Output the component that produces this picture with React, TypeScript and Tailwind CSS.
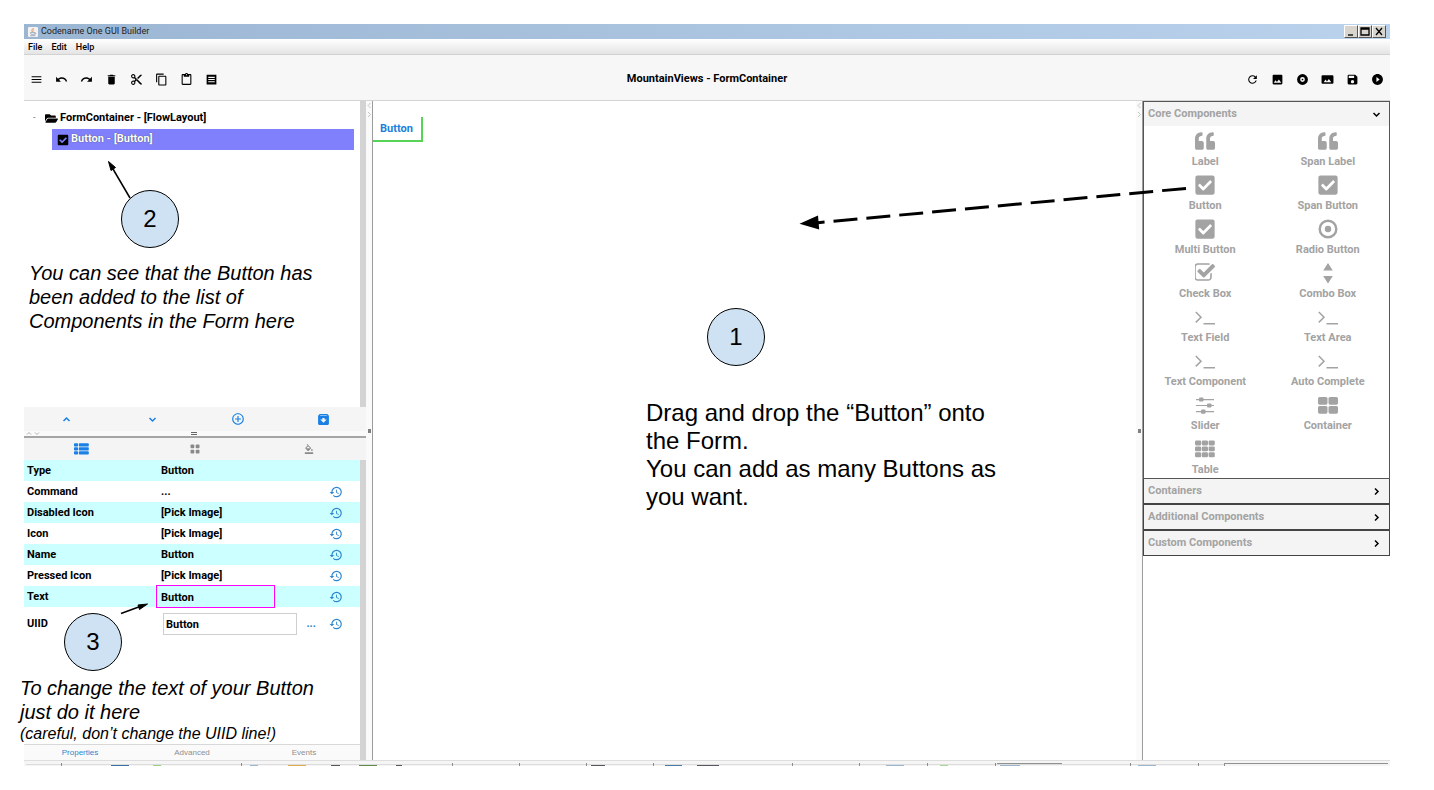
import { useId, useState, type ReactNode } from "react";
import {
  MdAddCircleOutline,
  MdContentCopy,
  MdContentCut,
  MdContentPaste,
  MdDelete,
  MdFormatColorFill,
  MdHistory,
  MdMenu,
  MdPhoto,
  MdPlayCircleFilled,
  MdRedo,
  MdRefresh,
  MdSave,
  MdUndo,
} from "react-icons/md";
import { FaCheckSquare, FaFolderOpen, FaQuoteLeft } from "react-icons/fa";

type IconProps = { className?: string };

const chevrons = {
  up: "M2 8l4-4 4 4",
  down: "M2 4l4 4 4-4",
  right: "M4 2l4 4-4 4",
};

const Chevron = ({ direction, className }: IconProps & { direction: keyof typeof chevrons }) => (
  <svg viewBox="0 0 12 12" className={className} fill="none" stroke="currentColor" strokeWidth="2">
    <path d={chevrons[direction]} />
  </svg>
);

const ListBoxIcon = ({ className }: IconProps) => (
  <svg viewBox="0 0 24 24" className={className} fill="currentColor">
    <path fillRule="evenodd" d="M3 3h18v18H3zM6 7v2h12V7zM6 11v2h12v-2zM6 15v2h12v-2z" />
  </svg>
);

const ImageBoxIcon = ({ className }: IconProps) => (
  <svg viewBox="0 0 24 24" className={className} fill="currentColor">
    <path fillRule="evenodd" d="M3 4h18q2 0 2 2v12q0 2-2 2H3q-2 0-2-2V6q0-2 2-2zM5 17h14l-4.500-6-3.500 4.500L8.500 12z" />
  </svg>
);

const RecordIcon = ({ className }: IconProps) => (
  <svg viewBox="0 0 24 24" className={className} fill="none">
    <circle cx="12" cy="12" r="7.200" stroke="currentColor" strokeWidth="5.600" />
    <circle cx="12" cy="12" r="1.600" fill="currentColor" />
  </svg>
);

const ArchiveIcon = ({ className }: IconProps) => (
  <svg viewBox="0 0 24 24" className={className} fill="currentColor">
    <path fillRule="evenodd" d="M5 2h14l3 3v15q0 2-2 2H4q-2 0-2-2V5zM5 5h14l-1-1H6zM10 9v3H6l6 6 6-6h-4V9z" />
  </svg>
);

const CheckSquareIcon = ({ className }: IconProps) => (
  <span className={`flex items-center justify-center ${className}`}>
    <FaCheckSquare className="size-[22px] shrink-0" />
  </span>
);

const CheckOutlineIcon = ({ className }: IconProps) => (
  <svg viewBox="128 160 1600 1500" className={className} fill="currentColor">
    <path d="M1472 930v318q0 119-84.500 203.500t-203.500 84.500h-832q-119 0-203.500-84.500t-84.500-203.500v-832q0-119 84.500-203.500t203.500-84.500h832q63 0 117 25 15 7 18 23 3 17-9 29l-49 49q-10 10-23 10-3 0-9-2-23-6-45-6h-832q-66 0-113 47t-47 113v832q0 66 47 113t113 47h832q66 0 113-47t47-113v-254q0-13 9-22l64-64q10-10 23-10 6 0 12 3 20 8 20 29zm231-489l-814 814q-24 24-57 24t-57-24l-430-430q-24-24-24-57t24-57l110-110q24-24 57-24t57 24l263 263 647-647q24-24 57-24t57 24l110 110q24 24 24 57t-24 57z" />
  </svg>
);

const RadioIcon = ({ className }: IconProps) => (
  <svg viewBox="0 0 20 20" className={className} fill="none">
    <circle cx="10" cy="10" r="8.300" stroke="currentColor" strokeWidth="2.400" />
    <circle cx="10" cy="10" r="3.200" fill="currentColor" />
  </svg>
);

const SortIcon = ({ className }: IconProps) => (
  <svg viewBox="0 0 20 20" className={className} fill="currentColor">
    <path d="M10 0l4.800 7.500h-9.600zM10 20.500l4.800-7.500h-9.600z" />
  </svg>
);

const TerminalIcon = ({ className }: IconProps) => (
  <svg viewBox="0 0 20 20" className={className} fill="none" stroke="currentColor" strokeWidth="1.500">
    <path d="M0.800 5l5.200 5.200L0.800 15.400M8.500 16.800H20" />
  </svg>
);

const SlidersIcon = ({ className }: IconProps) => (
  <svg viewBox="0 0 20 20" className={className} fill="currentColor">
    <path d="M1 4h18v1.200H1zM1 9.900h18v1.200H1zM1 16h18v1.200H1z" />
    <rect x="4" y="2.400" width="4.500" height="4.200" rx="1" />
    <rect x="12" y="8.400" width="4.500" height="4.200" rx="1" />
    <rect x="6" y="14.500" width="4.500" height="4.200" rx="1" />
  </svg>
);

const FourCellsIcon = ({ className }: IconProps) => (
  <svg viewBox="0 0 20 20" className={className} fill="currentColor">
    <rect x="0" y="2" width="9.500" height="7.700" rx="1.600" />
    <rect x="10.500" y="2" width="9.500" height="7.700" rx="1.600" />
    <rect x="0" y="11" width="9.500" height="7.700" rx="1.600" />
    <rect x="10.500" y="11" width="9.500" height="7.700" rx="1.600" />
  </svg>
);

const NineCellsIcon = ({ className }: IconProps) => (
  <svg viewBox="1 1 20 18" className={className} fill="currentColor">
    {[1.5, 7.4, 13.3].map((y) =>
      [1, 7.8, 14.6].map((x) => <rect key={`${x}-${y}`} x={x} y={y} width="6.200" height="4.900" rx="1.300" />),
    )}
  </svg>
);

const ThListIcon = ({ className }: IconProps) => (
  <svg viewBox="0 0 15 12" className={className} fill="currentColor">
    {[0.2, 4.2, 8.2].map((y) => (
      <g key={y}>
        <rect x="0" y={y} width="4" height="3.400" rx="0.800" />
        <rect x="4.800" y={y} width="10" height="3.400" rx="0.800" />
      </g>
    ))}
  </svg>
);

const DotsIcon = ({ className }: IconProps) => (
  <svg viewBox="0 0 10 10" className={className} fill="currentColor">
    <rect x="0.500" y="0.500" width="3.800" height="3.800" rx="1" />
    <rect x="5.700" y="0.500" width="3.800" height="3.800" rx="1" />
    <rect x="0.500" y="5.700" width="3.800" height="3.800" rx="1" />
    <rect x="5.700" y="5.700" width="3.800" height="3.800" rx="1" />
  </svg>
);

const JavaCupIcon = ({ className }: IconProps) => (
  <svg viewBox="0 0 10 10" className={className}>
    <rect x="0" y="0" width="10" height="10" rx="1" fill="#f4f1ee" />
    <path d="M5.500 1c-2 1.500 1 2-.8 3.800M4 2.500c-1 1 .6 1.600 0 2.500" stroke="#d98a5a" strokeWidth="0.900" fill="none" />
    <path d="M2.500 5.600h4.500c0 1.500-.8 2-2.200 2s-2.300-.6-2.300-2zM7 6c1.300-.2 1.100 1.200-.4 1.200M2 8.700h5.500" stroke="#7d93b0" strokeWidth="0.700" fill="none" />
  </svg>
);

const leftTools = [
  { label: "Menu", icon: MdMenu },
  { label: "Undo", icon: MdUndo },
  { label: "Redo", icon: MdRedo },
  { label: "Delete", icon: MdDelete },
  { label: "Cut", icon: MdContentCut },
  { label: "Copy", icon: MdContentCopy },
  { label: "Paste", icon: MdContentPaste },
  { label: "Details", icon: ListBoxIcon },
];

const rightTools = [
  { label: "Refresh", icon: MdRefresh },
  { label: "Image", icon: MdPhoto },
  { label: "Record", icon: RecordIcon },
  { label: "Background", icon: ImageBoxIcon },
  { label: "Save", icon: MdSave },
  { label: "Preview", icon: MdPlayCircleFilled },
];

const windowButtons = [
  { label: "Minimize", d: "M3 9h5" },
  { label: "Maximize", d: "M2 2h8v7H2zM2 3h8" },
  { label: "Close", d: "M3 2l6 7M9 2l-6 7" },
];

const palette = [
  { label: "Label", icon: FaQuoteLeft },
  { label: "Span Label", icon: FaQuoteLeft },
  { label: "Button", icon: CheckSquareIcon },
  { label: "Span Button", icon: CheckSquareIcon },
  { label: "Multi Button", icon: CheckSquareIcon },
  { label: "Radio Button", icon: RadioIcon },
  { label: "Check Box", icon: CheckOutlineIcon },
  { label: "Combo Box", icon: SortIcon },
  { label: "Text Field", icon: TerminalIcon },
  { label: "Text Area", icon: TerminalIcon },
  { label: "Text Component", icon: TerminalIcon },
  { label: "Auto Complete", icon: TerminalIcon },
  { label: "Slider", icon: SlidersIcon },
  { label: "Container", icon: FourCellsIcon },
  { label: "Table", icon: NineCellsIcon },
];

const properties = [
  { name: "Type", value: "Button", reset: false },
  { name: "Command", value: "...", reset: true },
  { name: "Disabled Icon", value: "[Pick Image]", reset: true },
  { name: "Icon", value: "[Pick Image]", reset: true },
  { name: "Name", value: "Button", reset: true },
  { name: "Pressed Icon", value: "[Pick Image]", reset: true },
];

function ToolGroup({ tools }: { tools: { label: string; icon: (p: IconProps) => ReactNode }[] }) {
  return (
    <div className="flex">
      {tools.map(({ label, icon: Icon }) => (
        <button key={label} type="button" aria-label={label} className="flex h-6 w-[25px] items-center justify-center">
          <Icon className="size-[13px]" />
        </button>
      ))}
    </div>
  );
}

function ResetButton({ name }: { name: string }) {
  return (
    <button type="button" aria-label={`Reset ${name}`} className="ml-[13px] block text-[#2d86cf]">
      <MdHistory className="size-[14px]" />
    </button>
  );
}

function VerticalSplitter() {
  return (
    <div className="flex w-[7px] shrink-0 flex-col items-center border-r border-[#9c9c9c] bg-[#fafafa] pb-4 text-[#b8b8b8]">
      <svg viewBox="0 0 6 16" className="h-4 w-[6px]" fill="none" stroke="currentColor" strokeWidth="0.800">
        <path d="M4.500 2L2 4.500 4.500 7M2 11l2.500 2.500L2 16" />
      </svg>
      <div className="flex flex-1 items-center">
        <div className="h-1 w-[3px] bg-[#808080]" />
      </div>
    </div>
  );
}

function Marker({ children, className }: { children: ReactNode; className: string }) {
  return (
    <div
      className={`absolute flex size-[58px] items-center justify-center rounded-full border border-black bg-[#cfe2f3] text-2xl ${className}`}
    >
      {children}
    </div>
  );
}

function TaskBar() {
  return (
    <svg aria-hidden="true" viewBox="0 0 1366 6" preserveAspectRatio="none" className="block h-[6px] w-full">
      <rect width="1366" height="6" fill="#f5f5f5" />
      <path d="M0 0.500H1366" stroke="#dedede" />
      <path d="M2 4.500H1200" stroke="#dcdcdc" />
      <path
        d="M37.500 3v3M217.500 3v3M428.500 3v3M495.500 3v3M562.500 3v3M629.500 3v3M768.500 3v3M835.500 3v3M903.500 3v3M971.500 3v3M1106.500 3v3M1174.500 3v3M1200.500 3v3"
        stroke="#8c8c8c"
      />
      <path d="M973 3.500H1038M1200 3.500H1364" stroke="#909090" />
      <path d="M87 5.500h18" stroke="#3a6ea5" />
      <path d="M129 5.500h8" stroke="#9bd27d" />
      <path d="M226 5.500h8M976 5.500h20M1114 5.500h18M862 5.500h18" stroke="#9ab5cc" />
      <path d="M264 5.500h18" stroke="#e0a94a" />
      <path d="M307 5.500h9M372 5.500h6M673 5.500h22M567 5.500h14" stroke="#55585f" />
      <path d="M335 5.500h18" stroke="#62894e" />
      <path d="M641 5.500h17" stroke="#4a7aa8" />
      <path d="M916 5.500h8" stroke="#a8d890" />
    </svg>
  );
}

export default function App() {
  const [text, setText] = useState("Button");
  const [uiid, setUiid] = useState("Button");
  const id = useId();

  return (
    <div className="relative flex min-h-screen flex-col bg-white py-6 pr-11 pl-6 font-['Liberation_Sans',Arial,sans-serif] text-black">
      <header className="shrink-0 font-['Roboto','Liberation_Sans',sans-serif]">
        <div className="flex h-[15px] items-center bg-linear-to-r from-[#9bb6d3] to-[#bad2ec] px-1">
          <JavaCupIcon className="size-[10px]" />
          <span className="ml-[3px] flex-1 text-[9px] leading-[15px] text-[#222]">Codename One GUI Builder</span>
          <div className="flex">
            {windowButtons.map(({ label, d }) => (
              <button
                key={label}
                type="button"
                aria-label={label}
                className="border border-t-white border-r-[#555] border-b-[#555] border-l-white bg-[#d8d5cf]"
              >
                <svg viewBox="0 0 12 11" className="h-[11px] w-3" fill="none" stroke="#000" strokeWidth="1.300">
                  <path d={d} />
                </svg>
              </button>
            ))}
          </div>
        </div>
        <nav className="flex h-4 items-center gap-[9px] border-b border-[#d2d2d2] bg-linear-to-b from-white to-[#e4e4e4] px-1 text-[9px] leading-4 font-medium">
          <button type="button">File</button>
          <button type="button">Edit</button>
          <button type="button">Help</button>
        </nav>
        <div className="flex h-[46px] items-center justify-between border-b border-[#d4d4d4] bg-[#f7f7f7] pt-1">
          <ToolGroup tools={leftTools} />
          <h1 className="-ml-[50px] text-[11px] font-bold">MountainViews - FormContainer</h1>
          <ToolGroup tools={rightTools} />
        </div>
      </header>

      <div className="flex flex-1 font-['Roboto','Liberation_Sans',sans-serif] text-[11px] font-bold">
        <aside className="flex w-[342px] shrink-0 flex-col">
          <section className="flex h-[306px]">
            <ul className="flex-1 pt-[7px]">
              <li>
                <div className="flex h-5 items-center pl-[9px]">
                  <span className="w-3 text-[9px] font-normal text-gray-500">-</span>
                  <FaFolderOpen className="mr-[2px] size-[13px]" />
                  FormContainer - [FlowLayout]
                </div>
                <ul className="pt-px pr-[6px] pl-7">
                  <li className="flex h-[21px] items-center bg-[#8080fc] pl-[5px] text-white">
                    <FaCheckSquare className="mr-[2px] size-3 text-black" />
                    <span className="[text-shadow:0_0_1px_#333]">Button - [Button]</span>
                  </li>
                </ul>
              </li>
            </ul>
            <div className="w-[6px] bg-[#d3d3d3]" />
          </section>

          <div className="grid h-6 grid-cols-4 items-center justify-items-center bg-[#f5f5f5] text-[#1a80e5]">
            <button type="button" aria-label="Move up">
              <Chevron direction="up" className="size-[9px]" />
            </button>
            <button type="button" aria-label="Move down">
              <Chevron direction="down" className="size-[9px]" />
            </button>
            <button type="button" aria-label="Add">
              <MdAddCircleOutline className="size-[14px]" />
            </button>
            <button type="button" aria-label="Archive">
              <ArchiveIcon className="size-[13px]" />
            </button>
          </div>

          <div className="flex h-[7px] items-center border-b-2 border-[#a5a5a5] bg-[#fafafa] pl-[2px] text-[#909090]">
            <svg viewBox="0 0 14 5" className="h-[5px] w-[14px]" fill="none" stroke="currentColor" strokeWidth="0.700">
              <path d="M1 3.500L3 1.500l2 2M9 1.500l2 2 2-2" />
            </svg>
            <div className="ml-[151px] h-[3px] w-[6px] border-y border-[#666]" />
          </div>

          <div className="grid h-[22px] grid-cols-3 items-center justify-items-center bg-[#f4f4f4] text-[#8a8a8a]">
            <button type="button" aria-label="List view" className="text-[#1a80e5]">
              <ThListIcon className="h-3 w-[15px]" />
            </button>
            <button type="button" aria-label="Grid view">
              <DotsIcon className="size-[10px]" />
            </button>
            <button type="button" aria-label="Style">
              <MdFormatColorFill className="size-[10px]" />
            </button>
          </div>

          <div className="flex flex-1">
            <div className="flex flex-1 flex-col justify-between">
              <table className="w-full table-fixed border-collapse text-left">
                <colgroup>
                  <col className="w-[132px]" />
                  <col />
                  <col className="w-6" />
                  <col className="w-11" />
                </colgroup>
                <tbody>
                  {properties.map(({ name, value, reset }) => (
                    <tr key={name} className="h-[21px] odd:bg-[#ccffff]">
                      <th scope="row" className="p-0 pt-[2px] pl-[3px] font-bold">
                        {name}
                      </th>
                      <td className="p-0 pt-[2px] pl-[5px]" colSpan={2}>
                        {value}
                      </td>
                      <td className="p-0">{reset && <ResetButton name={name} />}</td>
                    </tr>
                  ))}
                  <tr className="h-[21px] odd:bg-[#ccffff]">
                    <th scope="row" className="p-0 pt-[2px] pl-[3px] font-bold">
                      <label htmlFor={`${id}-text`}>Text</label>
                    </th>
                    <td className="p-0" colSpan={2}>
                      <input
                        id={`${id}-text`}
                        value={text}
                        onChange={(e) => setText(e.target.value)}
                        className="-my-px block h-[23px] w-[119px] border border-[#f0f] bg-transparent pt-px pl-1 outline-none"
                      />
                    </td>
                    <td className="p-0">
                      <ResetButton name="Text" />
                    </td>
                  </tr>
                  <tr className="h-[34px]">
                    <th scope="row" className="p-0 pl-[3px] font-bold">
                      <label htmlFor={`${id}-uiid`}>UIID</label>
                    </th>
                    <td className="p-0 pl-[7px]">
                      <input
                        id={`${id}-uiid`}
                        value={uiid}
                        onChange={(e) => setUiid(e.target.value)}
                        className="block h-[22px] w-[134px] border border-[#cfcfcf] bg-white pl-[2px] outline-none"
                      />
                    </td>
                    <td className="p-0 text-right">
                      <button type="button" aria-label="Choose UIID" className="text-[#2d86cf]">
                        ...
                      </button>
                    </td>
                    <td className="p-0">
                      <ResetButton name="UIID" />
                    </td>
                  </tr>
                </tbody>
              </table>
              <div className="grid h-4 grid-cols-3 border-t border-[#d8d8d8] bg-[#fafafa] font-['Liberation_Sans',sans-serif] text-[8px] font-normal text-[#8f8f8f]">
                <button type="button" className="text-[#2d86cf]">
                  Properties
                </button>
                <button type="button">Advanced</button>
                <button type="button">Events</button>
              </div>
            </div>
            <div className="w-[6px] bg-[#d3d3d3]" />
          </div>
        </aside>

        <VerticalSplitter />

        <main className="flex-1 pt-4">
          <button
            type="button"
            className="flex h-[25px] items-center border-r-2 border-b-2 border-[#55d455] pt-[2px] pr-2 pl-[7px] text-[#1b7fdc]"
          >
            Button
          </button>
        </main>

        <VerticalSplitter />

        <aside className="w-[247px] shrink-0 text-[#a3a3a3]">
          <section className="border border-[#555]">
            <button type="button" className="flex h-6 w-full items-center justify-between bg-[#f4f4f4] px-1">
              Core Components
              <Chevron direction="down" className="mr-1 size-[9px] text-black" />
            </button>
            <div className="grid grid-cols-2">
              {palette.map(({ label, icon: Icon }) => (
                <button key={label} type="button" className="flex h-11 flex-col items-center pt-[5px]">
                  <Icon className="size-5" />
                  <span className="mt-[3px] leading-4">{label}</span>
                </button>
              ))}
            </div>
          </section>
          {["Containers", "Additional Components", "Custom Components"].map((label) => (
            <button
              key={label}
              type="button"
              className="flex h-[26px] w-full items-center justify-between border-x border-b-2 border-[#444] bg-[#f4f4f4] px-1 last:h-[25px] last:border-b"
            >
              {label}
              <Chevron direction="right" className="mr-1 size-[9px] text-black" />
            </button>
          ))}
        </aside>
      </div>

      <TaskBar />

      <svg
        aria-hidden="true"
        viewBox="0 0 1434 790"
        className="pointer-events-none absolute top-0 left-0 h-[790px] w-[1434px]"
        fill="none"
        stroke="#000"
      >
        <path d="M1186 188.400L818 222.700" strokeWidth="3" strokeDasharray="24 9" />
        <path d="M799.500 223.700l18.500-8.200 1.200 14z" fill="#000" stroke="none" />
        <path d="M130 198L113 169" strokeWidth="1.500" />
        <path d="M108.500 161.500l7 6-4.500 3z" fill="#000" />
        <path d="M121 613.500l19-7" strokeWidth="1.500" />
        <path d="M147.500 604l-8 5.500-1.500-4.500z" fill="#000" />
      </svg>

      <Marker className="top-[308px] left-[707px]">1</Marker>
      <p className="absolute top-[399px] left-[646px] w-[370px] text-2xl leading-7">
        Drag and drop the “Button” onto
        <br />
        the Form.
        <br />
        You can add as many Buttons as you want.
      </p>

      <Marker className="top-[190px] left-[121px]">2</Marker>
      <p className="absolute top-[261px] left-[29px] w-[300px] text-xl leading-6 italic">
        You can see that the Button has been added to the list of Components in the Form here
      </p>

      <Marker className="top-[613px] left-[64px]">3</Marker>
      <div className="absolute top-[676px] left-[20px] w-[320px] text-xl leading-6 italic">
        <p>
          To change the text of your Button
          <br />
          just do it here
        </p>
        <p className="text-base leading-5">(careful, don’t change the UIID line!)</p>
      </div>
    </div>
  );
}
